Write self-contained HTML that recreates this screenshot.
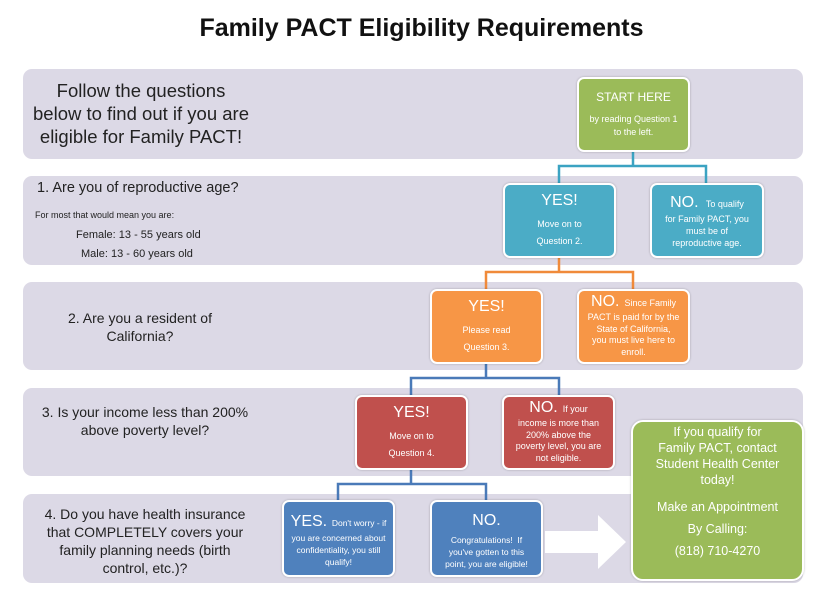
<!DOCTYPE html>
<html><head><meta charset="utf-8"><style>
body{margin:0;width:825px;height:595px;background:#fff;position:relative;overflow:hidden;font-family:"Liberation Sans",sans-serif;}
.a{position:absolute;}
.band{position:absolute;left:23px;width:780px;background:#dcd9e6;border-radius:9px;}
.box{position:absolute;border:2px solid #fff;border-radius:7px;color:#fff;text-align:center;box-sizing:border-box;font-size:9px;line-height:13px;box-shadow:0 0 2px rgba(0,0,0,.25);white-space:nowrap;}
.big{font-size:16px;line-height:20px;}
.q{position:absolute;color:#222;font-size:14px;line-height:18px;white-space:nowrap;}
</style></head><body>
<div class="a" style="left:0;width:843px;top:14px;text-align:center;font-size:25px;font-weight:bold;color:#111;">Family PACT Eligibility Requirements</div>

<div class="band" style="top:69px;height:90px"></div>
<div class="band" style="top:176px;height:89px"></div>
<div class="band" style="top:282px;height:88px"></div>
<div class="band" style="top:388px;height:88px"></div>
<div class="band" style="top:494px;height:89px"></div>

<div class="q" style="left:23px;width:236px;top:79px;text-align:center;font-size:18.5px;line-height:23px;">Follow the questions<br>below to find out if you are<br>eligible for Family PACT!</div>
<div class="q" style="left:37px;top:179px;font-size:14.5px">1. Are you of reproductive age?</div>
<div class="q" style="left:35px;top:206px;font-size:9px">For most that would mean you are:</div>
<div class="q" style="left:76px;top:226px;font-size:11px">Female: 13 - 55 years old</div>
<div class="q" style="left:81px;top:245px;font-size:11px">Male: 13 - 60 years old</div>
<div class="q" style="left:40px;top:309px;width:200px;text-align:center;">2. Are you a resident of<br>California?</div>
<div class="q" style="left:30px;top:403px;width:230px;text-align:center;">3. Is your income less than 200%<br>above poverty level?</div>
<div class="q" style="left:25px;top:505px;width:240px;text-align:center;">4. Do you have health insurance<br>that COMPLETELY covers your<br>family planning needs (birth<br>control, etc.)?</div>

<svg class="a" style="left:0;top:0" width="825" height="595">
<g fill="none" stroke-width="2.5">
<path d="M633 151V166H559V183M633 166H706V183" stroke="#3ba3c2"/>
<path d="M559 257V272H486V289M559 272H633V289" stroke="#f08a3a"/>
<path d="M486 363V378H411V395M486 378H559V395" stroke="#4a7ab8"/>
<path d="M411 469V484H338V500M411 484H486V500" stroke="#4a7ab8"/>
</g>
<path d="M545 531H598V515L626 542L598 569V553H545Z" fill="#fff"/>
</svg>

<div class="box" style="left:577px;top:77px;width:113px;height:75px;background:#9bbb59;padding-top:12px"><div style="font-size:12px;margin-bottom:9px">START HERE</div>by reading Question 1<br>to the left.</div>

<div class="box" style="left:503px;top:183px;width:113px;height:75px;background:#4bacc6;padding-top:6px"><div class="big" style="margin-bottom:7px">YES!</div>Move on to<br><span style="line-height:20px">Question 2.</span></div>
<div class="box" style="left:650px;top:183px;width:114px;height:75px;background:#4bacc6;padding-top:8px;line-height:12px"><span class="big">NO.</span>&nbsp;&nbsp; To qualify<br>for Family PACT, you<br>must be of<br>reproductive age.</div>

<div class="box" style="left:430px;top:289px;width:113px;height:75px;background:#f79646;padding-top:6px"><div class="big" style="margin-bottom:7px">YES!</div>Please read<br><span style="line-height:20px">Question 3.</span></div>
<div class="box" style="left:577px;top:289px;width:113px;height:75px;background:#f79646;padding-top:1px;line-height:11.5px"><span class="big">NO.</span>&nbsp; Since Family<br>PACT is paid for by the<br>State of California,<br>you must live here to<br>enroll.</div>

<div class="box" style="left:355px;top:395px;width:113px;height:75px;background:#c0504d;padding-top:6px"><div class="big" style="margin-bottom:7px">YES!</div>Move on to<br><span style="line-height:20px">Question 4.</span></div>
<div class="box" style="left:502px;top:395px;width:113px;height:75px;background:#c0504d;padding-top:1px;line-height:11.5px"><span class="big">NO.</span>&nbsp; If your<br>income is more than<br>200% above the<br>poverty level, you are<br>not eligible.</div>

<div class="box" style="left:282px;top:500px;width:113px;height:77px;background:#4f81bd;padding-top:10px;line-height:12px;font-size:8.5px"><span class="big">YES.</span>&nbsp; Don't worry - if<br>you are concerned about<br>confidentiality, you still<br>qualify!</div>
<div class="box" style="left:430px;top:500px;width:113px;height:77px;background:#4f81bd;padding-top:9px;line-height:12px;font-size:8.5px"><div class="big" style="margin-bottom:3px">NO.</div>Congratulations!&nbsp; If<br>you've gotten to this<br>point, you are eligible!</div>

<div class="box" style="left:631px;top:420px;width:173px;height:161px;background:#9bbb59;border-radius:12px;font-size:12.5px;line-height:16px;padding-top:2px">If you qualify for<br>Family PACT, contact<br>Student Health Center<br>today!<div style="margin-top:8px;line-height:22px">Make an Appointment<br>By Calling:<br>(818) 710-4270</div></div>
</body></html>
